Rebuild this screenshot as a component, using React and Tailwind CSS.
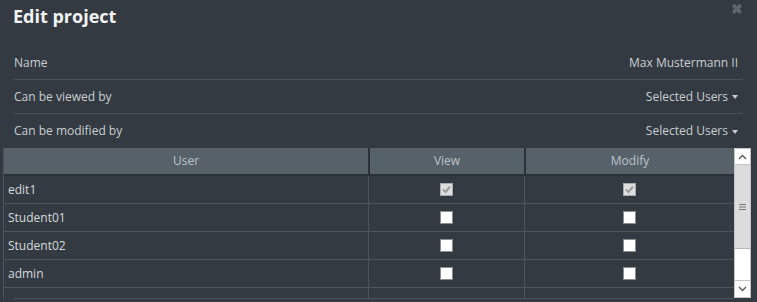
import React from 'react'

const users = [
  { name: 'edit1', view: true, modify: true },
  { name: 'Student01', view: false, modify: false },
  { name: 'Student02', view: false, modify: false },
  { name: 'admin', view: false, modify: false },
  { name: '', view: null, modify: null },
]

function Box({ checked }) {
  if (checked === null) return null
  if (checked) {
    return (
      <span className="w-[13px] h-[13px] border border-[#a9a9a9] bg-[#dedede] flex items-center justify-center">
        <svg width="11" height="11" viewBox="0 0 11 11">
          <path d="M2 5.5 L4.5 8 L9 2.5" stroke="#9c9c9c" strokeWidth="2" fill="none" />
        </svg>
      </span>
    )
  }
  return <span className="w-[13px] h-[13px] border border-[#8c8c8c] bg-white" />
}

function Row({ label, value, arrow, last }) {
  return (
    <div className={'h-[34px] mx-[14px] flex items-center justify-between ' + (last ? '' : 'border-b border-[#4a5159]')}>
      <span>{label}</span>
      <span className="flex items-center gap-[4px] mr-[5px]">
        {value}
        {arrow && (
          <svg width="6" height="4" viewBox="0 0 6 4" className="mt-[1px]">
            <path d="M0 0 H6 L3 4 Z" fill="#c9ced2" />
          </svg>
        )}
      </span>
    </div>
  )
}

export default function App() {
  return (
    <div className="w-[757px] h-[302px] bg-[#343a41] text-[#c9ced2] text-[12px] overflow-hidden relative" style={{ fontFamily: '"Open Sans", sans-serif' }}>
      <div className="h-[46px] px-[13px] pt-[2px] flex items-start">
        <h1 className="text-[18px] font-bold text-[#f2f3f4] leading-[28px]">Edit project</h1>
      </div>
      <span className="absolute right-[14px] top-[2px] text-[#5f666d] text-[14px] font-bold leading-none">✖</span>
      <Row label="Name" value="Max Mustermann II" />
      <Row label="Can be viewed by" value="Selected Users" arrow />
      <Row label="Can be modified by" value="Selected Users" arrow last />
      <div className="ml-[3px] w-[748px] h-[151px] flex overflow-hidden">
        <div className="w-[731px] flex flex-col border-l border-[#4b545c] relative">
          <div className="h-[28px] shrink-0 flex gap-[2px] bg-[#2c3137] border-b-2 border-[#2c3137] text-[#bcc3c8]">
            <div className="w-[364px] bg-[#56616a] flex items-center justify-center">User</div>
            <div className="w-[154px] bg-[#56616a] flex items-center justify-center">View</div>
            <div className="flex-1 bg-[#56616a] flex items-center justify-center">Modify</div>
          </div>
          {users.map((u, i) => (
            <div key={i} className="h-[28px] shrink-0 flex border-b border-[#4b545c] text-[#d6dadd]">
              <div className="w-[365px] pl-[4px] flex items-center border-r border-[#4b545c]">{u.name}</div>
              <div className="w-[156px] flex items-center justify-center border-r border-[#4b545c]">
                <Box checked={u.view} />
              </div>
              <div className="flex-1 flex items-center justify-center">
                <Box checked={u.modify} />
              </div>
            </div>
          ))}
          <div className="absolute left-[10px] right-0 bottom-0 h-px bg-[#4b545c]" />
        </div>
        <div className="w-[17px] h-[150px] shrink-0 border border-[#c4c4c4] bg-white flex flex-col">
          <div className="h-[16px] border-b border-[#c4c4c4] flex items-center justify-center">
            <svg width="9" height="6" viewBox="0 0 9 6">
              <path d="M1 5 L4.5 1.5 L8 5" stroke="#555" strokeWidth="1.3" fill="none" />
            </svg>
          </div>
          <div className="h-[84px] bg-[#dcdcdc] border-b border-[#b8b8b8] flex items-center justify-center">
            <svg width="9" height="8" viewBox="0 0 9 8">
              <path d="M1 1.5 H8 M1 4 H8 M1 6.5 H8" stroke="#777" strokeWidth="1.2" />
            </svg>
          </div>
          <div className="flex-1" />
          <div className="h-[17px] border-t border-[#c4c4c4] flex items-center justify-center">
            <svg width="9" height="6" viewBox="0 0 9 6">
              <path d="M1 1 L4.5 4.5 L8 1" stroke="#555" strokeWidth="1.3" fill="none" />
            </svg>
          </div>
        </div>
      </div>
    </div>
  )
}
